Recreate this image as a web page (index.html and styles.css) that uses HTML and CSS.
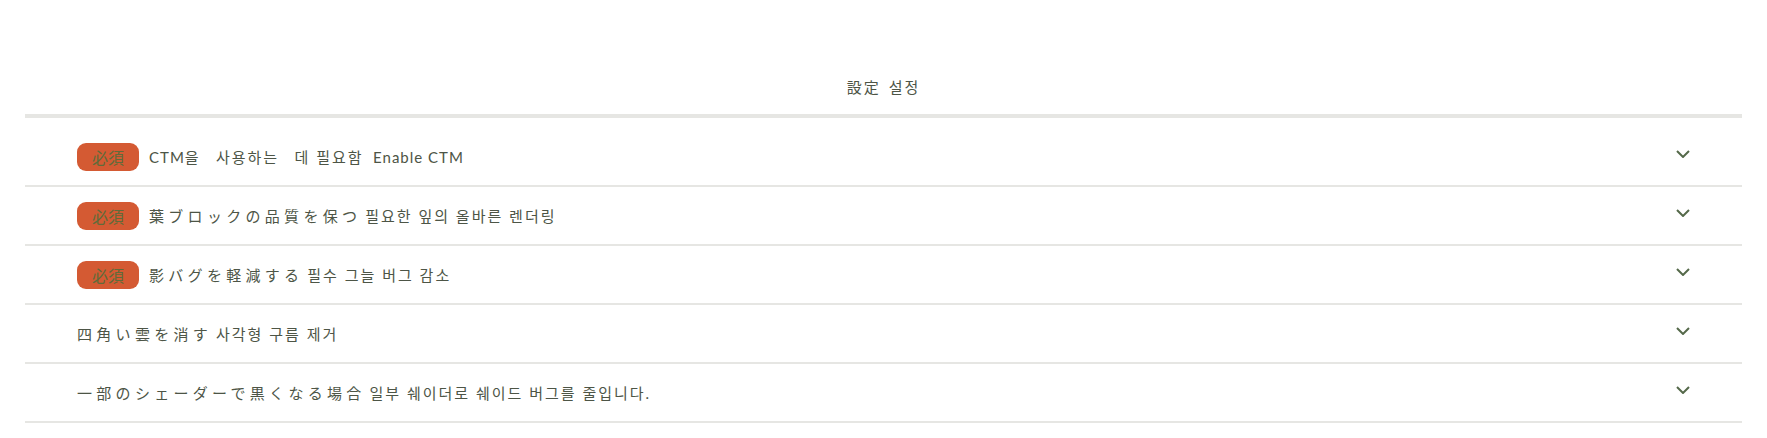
FILE: index.html
```html
<!DOCTYPE html>
<html lang="ja">

<head>
    <meta charset="UTF-8">
    <meta name="viewport" content="width=device-width, initial-scale=1.0">
    <title>設定 설정</title>
    <link rel="stylesheet" href="styles.css">
</head>

<body>
    <div class="settings">
        <header class="settings-title">
            <span class="ja">設定</span> <span class="ko">설정</span>
        </header>
        <ul class="option-list">
            <li class="option">
                <div class="option-label">
                    <span class="badge">必須</span>
                    <span class="option-text"><span class="en">CTM</span><span class="ko">을&ensp; 사용하는&ensp; 데 필요함&ensp;</span><span class="en">Enable CTM</span></span>
                </div>
                <svg class="chevron" width="14" height="8" viewBox="0 0 14 8"><path d="M1 1l6 6 6-6" /></svg>
            </li>
            <li class="option">
                <div class="option-label">
                    <span class="badge">必須</span>
                    <span class="option-text"><span class="ja">葉ブロックの品質を保つ</span> <span class="ko">필요한 잎의 올바른 렌더링</span></span>
                </div>
                <svg class="chevron" width="14" height="8" viewBox="0 0 14 8"><path d="M1 1l6 6 6-6" /></svg>
            </li>
            <li class="option">
                <div class="option-label">
                    <span class="badge">必須</span>
                    <span class="option-text"><span class="ja">影バグを軽減する</span> <span class="ko">필수 그늘 버그 감소</span></span>
                </div>
                <svg class="chevron" width="14" height="8" viewBox="0 0 14 8"><path d="M1 1l6 6 6-6" /></svg>
            </li>
            <li class="option">
                <div class="option-label">
                    <span class="option-text"><span class="ja">四角い雲を消す</span> <span class="ko">사각형 구름 제거</span></span>
                </div>
                <svg class="chevron" width="14" height="8" viewBox="0 0 14 8"><path d="M1 1l6 6 6-6" /></svg>
            </li>
            <li class="option">
                <div class="option-label">
                    <span class="option-text"><span class="ja">一部のシェーダーで黒くなる場合</span> <span class="ko">일부 쉐이더로 쉐이드 버그를 줄입니다.</span></span>
                </div>
                <svg class="chevron" width="14" height="8" viewBox="0 0 14 8"><path d="M1 1l6 6 6-6" /></svg>
            </li>
        </ul>
    </div>
</body>

</html>
```

FILE: styles.css
```css
/* Global Styles */
* {
    box-sizing: border-box;
}

body {
    margin: 0;
    background-color: white;
    font-family: Lato, 'Noto Sans CJK JP', 'Noto Sans CJK KR', sans-serif;
    font-size: 15px;
    color: #4d5546;
}

/* Text runs */
.ja {
    font-family: 'Noto Sans CJK JP', sans-serif;
    letter-spacing: 4.3px;
}

.ko {
    font-family: Lato, 'Noto Sans CJK KR', sans-serif;
    letter-spacing: 2px;
}

.en {
    font-family: Lato, sans-serif;
    letter-spacing: 1px;
}

/* Settings */
.settings {
    margin: 0 25px;
}

.settings-title {
    text-align: center;
    line-height: 21px;
    padding: 76px 0 16px;
    border-bottom: 4px solid #e6e6e3;
    margin-bottom: 10px;
}

.settings-title .ja {
    letter-spacing: 2px;
    margin-right: 4px;
}

/* Option rows */
.option-list {
    list-style: none;
    margin: 0;
    padding: 0;
}

.option {
    display: flex;
    align-items: center;
    justify-content: space-between;
    height: 59px;
    padding: 0 52px;
    border-bottom: 2px solid #e6e6e3;
}

.option-label {
    display: flex;
    align-items: center;
}

.option-text {
    white-space: pre;
}

.badge {
    font-family: 'Noto Sans CJK JP', sans-serif;
    font-size: 16px;
    line-height: 28px;
    height: 28px;
    padding: 0 15px;
    margin-right: 10px;
    border-radius: 9px;
    background-color: #d45a33;
    color: #5f6b3a;
}

.chevron {
    margin-bottom: 6px;
    fill: none;
    stroke: #55694a;
    stroke-width: 2;
}
```
